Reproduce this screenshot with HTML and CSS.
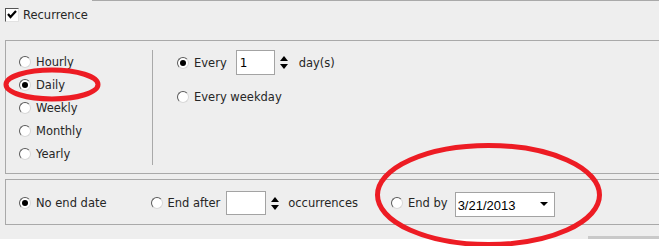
FILE: index.html
```html
<!DOCTYPE html>
<html lang="en">
<head>
<meta charset="utf-8">
<meta name="viewport" content="width=device-width, initial-scale=1">
<link rel="stylesheet" href="styles.css">
</head>
<body>
	<div id="dialog">
		<div id="tabLine"></div>
		<div class="check-row">
			<span class="checkbox">
				<svg width="12" height="12" viewBox="0 0 12 12"><path d="M2 5 L4.5 8 L10 2" fill="none" stroke="#000" stroke-width="2.2"/></svg>
			</span>
			<span>Recurrence</span>
		</div>

		<div class="group" id="pattern">
			<div class="freq">
				<div class="opt"><span class="radio"></span>Hourly</div>
				<div class="opt"><span class="radio on"></span>Daily</div>
				<div class="opt"><span class="radio"></span>Weekly</div>
				<div class="opt"><span class="radio"></span>Monthly</div>
				<div class="opt"><span class="radio"></span>Yearly</div>
			</div>
			<div class="detail">
				<div class="opt every-row">
					<span class="radio on"></span>Every
					<span class="field num">1</span>
					<span class="spin"><i class="up"></i><i class="down"></i></span>
					<span class="unit">day(s)</span>
				</div>
				<div class="opt weekday-row"><span class="radio"></span>Every weekday</div>
			</div>
		</div>

		<div class="group" id="range">
			<div class="opt"><span class="radio on"></span>No end date</div>
			<div class="opt end-after">
				<span class="radio"></span>End after
				<span class="field count"></span>
				<span class="spin"><i class="up"></i><i class="down"></i></span>
				<span class="unit">occurrences</span>
			</div>
			<div class="opt end-by">
				<span class="radio"></span>End by
				<span class="field date">3/21/2013<i class="drop"></i></span>
			</div>
		</div>

		<div id="footer"><div class="btn-edge"></div></div>
	</div>

	<!-- hand drawn marks over the screenshot -->
	<svg id="marks" width="659" height="246" viewBox="0 0 659 246">
		<ellipse cx="52" cy="84.5" rx="46" ry="14.5" fill="none" stroke="#ed1c24" stroke-width="5"/>
		<ellipse cx="488.5" cy="195" rx="111" ry="49.5" fill="none" stroke="#ed1c24" stroke-width="5"/>
	</svg>
</body>
</html>
```

FILE: styles.css
```css
:root {
	--panel:#eeeeee;
	--line:#a9a9a9;
	--text:#262626;
}

* {
	box-sizing:border-box;
}

html, body {
	margin:0;
	height:246px;
	background:#ffffff;
	font-family:"DejaVu Sans", Verdana, sans-serif;
	font-size:11.5px;
	color:var(--text);
}

body {
	position:relative;
	overflow:hidden;
}

#dialog {
	background:var(--panel);
	height:239px;
}

#tabLine {
	margin-left:92px;
	border-top:1px solid var(--line);
}

.check-row {
	display:flex;
	align-items:center;
	gap:4px;
	margin:6px 0 0 5px;
	height:15px;
}

.checkbox {
	width:14px;
	height:14px;
	display:flex;
	align-items:center;
	justify-content:center;
	background:#fff;
	border:1px solid;
	border-color:#555 #e2e2e2 #e2e2e2 #555;
}

.group {
	margin-left:5px;
	border:1px solid var(--line);
	border-right:none;
}

#pattern {
	margin-top:18px;
	display:flex;
	padding:9px 0 8px 13px;
}

.opt {
	display:flex;
	align-items:center;
	white-space:nowrap;
}

.radio {
	width:12px;
	height:12px;
	margin-right:5px;
	border-radius:50%;
	background:#fff;
	border:1px solid;
	border-color:#5a5a5a #d8d8d8 #d8d8d8 #5a5a5a;
	display:flex;
	align-items:center;
	justify-content:center;
	flex:none;
}

.radio.on::after {
	content:"";
	width:6px;
	height:6px;
	border-radius:50%;
	background:#000;
}

.freq {
	width:133px;
}

.freq .opt {
	height:23px;
}

.detail {
	border-left:1px solid var(--line);
	padding-left:24px;
}

.every-row {
	height:25px;
}

.weekday-row {
	height:20px;
	margin-top:12px;
}

.field {
	display:flex;
	align-items:center;
	background:#fff;
	border:1px solid #a3a3a3;
	color:#000;
	padding-left:3px;
}

.num {
	width:39px;
	height:25px;
	margin-left:9px;
	font-size:12px;
}

.spin {
	display:flex;
	flex-direction:column;
	gap:3px;
	margin-left:5px;
}

.spin i {
	width:0;
	height:0;
	border-left:4px solid transparent;
	border-right:4px solid transparent;
}

.spin .up {
	border-bottom:5px solid #000;
}

.spin .down {
	border-top:5px solid #000;
}

.every-row .unit {
	margin-left:11px;
}

#range {
	margin-top:5px;
	height:46px;
	display:flex;
	align-items:center;
	padding:2px 0 0 13px;
}

.end-after {
	margin-left:44px;
}

.count {
	width:40px;
	height:24px;
	margin-left:6px;
}

.end-after .unit {
	margin-left:9px;
}

.end-by {
	margin-left:33px;
}

.date {
	width:100px;
	height:25px;
	margin-left:7px;
	margin-top:3px;
	font-family:"Liberation Sans", Arial, sans-serif;
	font-size:13px;
	justify-content:space-between;
	padding:1px 6px 0 2px;
}

.drop {
	width:0;
	height:0;
	border-left:4px solid transparent;
	border-right:4px solid transparent;
	border-top:4px solid #000;
	margin-bottom:2px;
}

#footer {
	height:14px;
	display:flex;
	justify-content:flex-end;
	align-items:flex-end;
}

.btn-edge {
	width:71px;
	height:3px;
	background:#c9c9c9;
}

#marks {
	position:absolute;
	top:0;
	left:0;
	pointer-events:none;
}
```
